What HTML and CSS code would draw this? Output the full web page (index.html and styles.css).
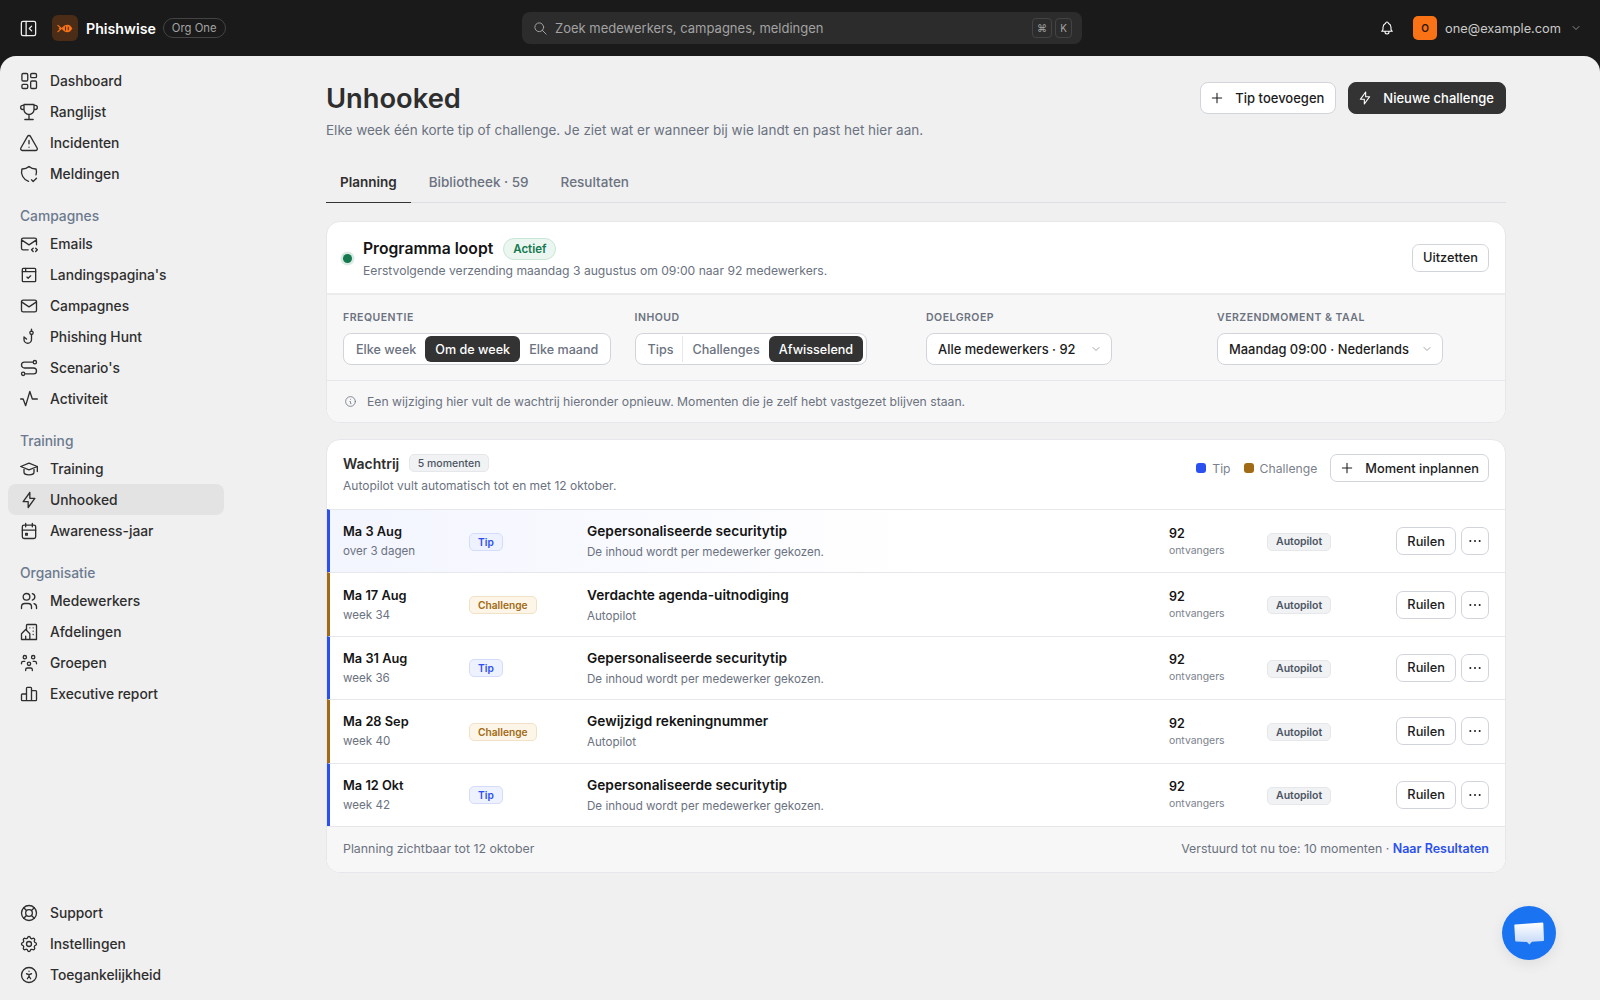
FILE: index.html
```html
<!DOCTYPE html>
<html lang="nl">
<head>
    <meta charset="UTF-8">
    <title>Unhooked - Phishwise</title>
    <link rel="stylesheet" href="styles.css">
</head>
<body>
    <svg class="sprite" xmlns="http://www.w3.org/2000/svg">
        <symbol id="i-panel" viewBox="0 0 24 24"><rect x="3" y="3" width="18" height="18" rx="2"/><path d="M9 3v18M16 15l-3-3 3-3"/></symbol>
        <symbol id="i-dashboard" viewBox="0 0 24 24"><rect x="3.5" y="3" width="7" height="9" rx="1.5"/><rect x="14" y="3" width="7" height="5" rx="1.5"/><rect x="14" y="12" width="7" height="9" rx="1.5"/><rect x="3.5" y="16" width="7" height="5" rx="1.5"/></symbol>
        <symbol id="i-trophy" viewBox="0 0 24 24"><path d="M6 9H4.5a2.5 2.5 0 0 1 0-5H6M18 9h1.5a2.5 2.5 0 0 0 0-5H18M7 21h10M12 15v6M18 3H6v6a6 6 0 0 0 12 0V3Z"/></symbol>
        <symbol id="i-alert" viewBox="0 0 24 24"><path d="M21.73 18l-8-14a2 2 0 0 0-3.48 0l-8 14A2 2 0 0 0 4 21h16a2 2 0 0 0 1.73-3M12 9v4M12 17h.01"/></symbol>
        <symbol id="i-shield" viewBox="0 0 24 24"><path d="M11.46 20.846a12 12 0 0 1-7.96-14.846a12 12 0 0 0 8.5-3a12 12 0 0 0 8.5 3a12 12 0 0 1-.09 7.06M15 19l2 2l4-4"/></symbol>
        <symbol id="i-mailcode" viewBox="0 0 24 24"><path d="M11 19H5a2 2 0 0 1-2-2V7a2 2 0 0 1 2-2h14a2 2 0 0 1 2 2v6M3 7l9 6l9-6M20 21l2-2l-2-2M17 17l-2 2l2 2"/></symbol>
        <symbol id="i-browser" viewBox="0 0 24 24"><rect x="4" y="4" width="16" height="16" rx="1"/><path d="M4 8h16M8 4v4M9.5 14.5l1.5 1.500l3-3"/></symbol>
        <symbol id="i-mail" viewBox="0 0 24 24"><rect x="3" y="5" width="18" height="14" rx="2"/><path d="M3 7l9 6l9-6"/></symbol>
        <symbol id="i-hook" viewBox="0 0 24 24"><path d="M15 9v6a4.500 4.500 0 0 1-9 0v-3l3 2.500"/><circle cx="15" cy="7" r="2"/><path d="M15 5V2.500"/></symbol>
        <symbol id="i-route" viewBox="0 0 24 24"><circle cx="5" cy="19" r="2"/><path d="M8 19h9.500a3.500 3.500 0 0 0 0-7h-11a3.500 3.500 0 0 1 0-7H16"/><circle cx="19" cy="5" r="2"/></symbol>
        <symbol id="i-activity" viewBox="0 0 24 24"><path d="M2 12h3l3 8l5-17l3 9h6"/></symbol>
        <symbol id="i-school" viewBox="0 0 24 24"><path d="M22 9l-10-4l-10 4l10 4l10-4v6M6 10.600V16a6 3 0 0 0 12 0v-5.400"/></symbol>
        <symbol id="i-bolt" viewBox="0 0 24 24"><path d="M13 3v7h6l-8 11v-7H5l8-11"/></symbol>
        <symbol id="i-calendar" viewBox="0 0 24 24"><rect x="4" y="5" width="16" height="16" rx="2"/><path d="M16 3v4M8 3v4M4 11h16M8 15h2v2H8z"/></symbol>
        <symbol id="i-users" viewBox="0 0 24 24"><circle cx="9" cy="7" r="4"/><path d="M3 21v-2a4 4 0 0 1 4-4h4a4 4 0 0 1 4 4v2M16 3.130a4 4 0 0 1 0 7.750M21 21v-2a4 4 0 0 0-3-3.850"/></symbol>
        <symbol id="i-building" viewBox="0 0 24 24"><path d="M8 9l5 5v7H8v-4m0 4H3v-7l5-5m1 1V4a1 1 0 0 1 1-1h10a1 1 0 0 1 1 1v17h-8M13 7v.01M17 7v.01M17 11v.01M17 15v.01"/></symbol>
        <symbol id="i-group" viewBox="0 0 24 24"><path d="M10 13a2 2 0 1 0 4 0a2 2 0 0 0-4 0M8 21v-1a2 2 0 0 1 2-2h4a2 2 0 0 1 2 2v1M15 5a2 2 0 1 0 4 0a2 2 0 0 0-4 0M17 10h2a2 2 0 0 1 2 2v1M5 5a2 2 0 1 0 4 0a2 2 0 0 0-4 0M3 13v-1a2 2 0 0 1 2-2h2"/></symbol>
        <symbol id="i-chart" viewBox="0 0 24 24"><path d="M3 13a1 1 0 0 1 1-1h4a1 1 0 0 1 1 1v6a1 1 0 0 1-1 1H4a1 1 0 0 1-1-1zM15 9a1 1 0 0 1 1-1h4a1 1 0 0 1 1 1v10a1 1 0 0 1-1 1h-4a1 1 0 0 1-1-1zM9 5a1 1 0 0 1 1-1h4a1 1 0 0 1 1 1v14a1 1 0 0 1-1 1h-4a1 1 0 0 1-1-1zM4 20h16"/></symbol>
        <symbol id="i-lifebuoy" viewBox="0 0 24 24"><circle cx="12" cy="12" r="4"/><circle cx="12" cy="12" r="9"/><path d="M15 15l3.350 3.350M9 15l-3.350 3.350M5.650 5.650L9 9M18.350 5.650L15 9"/></symbol>
        <symbol id="i-settings" viewBox="0 0 24 24"><path d="M10.325 4.317c.426-1.756 2.924-1.756 3.35 0a1.724 1.724 0 0 0 2.573 1.066c1.543-.94 3.31.826 2.37 2.37a1.724 1.724 0 0 0 1.065 2.572c1.756.426 1.756 2.924 0 3.35a1.724 1.724 0 0 0-1.066 2.573c.94 1.543-.826 3.31-2.37 2.37a1.724 1.724 0 0 0-2.572 1.065c-.426 1.756-2.924 1.756-3.35 0a1.724 1.724 0 0 0-2.573-1.066c-1.543.94-3.31-.826-2.37-2.37a1.724 1.724 0 0 0-1.065-2.572c-1.756-.426-1.756-2.924 0-3.35a1.724 1.724 0 0 0 1.066-2.573c-.94-1.543.826-3.31 2.37-2.37c1 .608 2.296.07 2.572-1.065z"/><circle cx="12" cy="12" r="3"/></symbol>
        <symbol id="i-access" viewBox="0 0 24 24"><circle cx="12" cy="12" r="9"/><path d="M10 16.500l2-3l2 3m-2-3v-2l3-1m-6 0l3 1M12 7.500h.01"/></symbol>
        <symbol id="i-bell" viewBox="0 0 24 24"><path d="M10 5a2 2 0 1 1 4 0a7 7 0 0 1 4 6v3a4 4 0 0 0 2 3H4a4 4 0 0 0 2-3v-3a7 7 0 0 1 4-6M9 17v1a3 3 0 0 0 6 0v-1"/></symbol>
        <symbol id="i-search" viewBox="0 0 24 24"><circle cx="10" cy="10" r="7"/><path d="M21 21l-6-6"/></symbol>
        <symbol id="i-plus" viewBox="0 0 24 24"><path d="M12 5v14M5 12h14"/></symbol>
        <symbol id="i-chevron" viewBox="0 0 24 24"><path d="M6 9l6 6l6-6"/></symbol>
        <symbol id="i-info" viewBox="0 0 24 24"><circle cx="12" cy="12" r="9"/><path d="M12 8h.01M11 12h1v4h1"/></symbol>
        <symbol id="i-dots" viewBox="0 0 24 24"><path d="M5 12h.01M12 12h.01M19 12h.01"/></symbol>
    </svg>

    <header class="topbar">
        <div class="topbar-left">
            <svg class="icon panel-toggle"><use href="#i-panel"/></svg>
            <div class="brand-tile">
                <svg viewBox="0 0 24 16" width="17" height="11">
                    <path class="fish-body" d="M6 8c3-4 6-5.500 9-5.500S20 5 22 8c-2 3-4 5.500-7 5.500S9 12 6 8z"/>
                    <path class="fish-tail" d="M1 3.500L6 8l-5 4.500M3 8h3"/>
                    <path class="fish-mark" d="M12 5v6M16 5.500v5"/>
                </svg>
            </div>
            <span class="brand-name">Phishwise</span>
            <span class="org-pill">Org One</span>
        </div>
        <div class="search">
            <svg class="icon search-icon"><use href="#i-search"/></svg>
            <span class="search-text">Zoek medewerkers, campagnes, meldingen</span>
            <span class="kbd">⌘</span>
            <span class="kbd kbd-key">K</span>
        </div>
        <div class="topbar-right">
            <svg class="icon bell"><use href="#i-bell"/></svg>
            <span class="avatar">O</span>
            <span class="email">one@example.com</span>
            <svg class="icon email-chevron"><use href="#i-chevron"/></svg>
        </div>
    </header>

    <div class="shell">
        <nav class="sidebar">
            <div class="nav-top">
                <a class="nav-item"><svg class="icon"><use href="#i-dashboard"/></svg>Dashboard</a>
                <a class="nav-item"><svg class="icon"><use href="#i-trophy"/></svg>Ranglijst</a>
                <a class="nav-item"><svg class="icon"><use href="#i-alert"/></svg>Incidenten</a>
                <a class="nav-item"><svg class="icon"><use href="#i-shield"/></svg>Meldingen</a>

                <div class="nav-label">Campagnes</div>
                <a class="nav-item"><svg class="icon"><use href="#i-mailcode"/></svg>Emails</a>
                <a class="nav-item"><svg class="icon"><use href="#i-browser"/></svg>Landingspagina's</a>
                <a class="nav-item"><svg class="icon"><use href="#i-mail"/></svg>Campagnes</a>
                <a class="nav-item"><svg class="icon"><use href="#i-hook"/></svg>Phishing Hunt</a>
                <a class="nav-item"><svg class="icon"><use href="#i-route"/></svg>Scenario's</a>
                <a class="nav-item"><svg class="icon"><use href="#i-activity"/></svg>Activiteit</a>

                <div class="nav-label">Training</div>
                <a class="nav-item"><svg class="icon"><use href="#i-school"/></svg>Training</a>
                <a class="nav-item active"><svg class="icon"><use href="#i-bolt"/></svg>Unhooked</a>
                <a class="nav-item"><svg class="icon"><use href="#i-calendar"/></svg>Awareness-jaar</a>

                <div class="nav-label">Organisatie</div>
                <a class="nav-item"><svg class="icon"><use href="#i-users"/></svg>Medewerkers</a>
                <a class="nav-item"><svg class="icon"><use href="#i-building"/></svg>Afdelingen</a>
                <a class="nav-item"><svg class="icon"><use href="#i-group"/></svg>Groepen</a>
                <a class="nav-item"><svg class="icon"><use href="#i-chart"/></svg>Executive report</a>
            </div>
            <div class="nav-bottom">
                <a class="nav-item"><svg class="icon"><use href="#i-lifebuoy"/></svg>Support</a>
                <a class="nav-item"><svg class="icon"><use href="#i-settings"/></svg>Instellingen</a>
                <a class="nav-item"><svg class="icon"><use href="#i-access"/></svg>Toegankelijkheid</a>
            </div>
        </nav>

        <main class="main">
            <div class="page-head">
                <div>
                    <h1 class="page-title">Unhooked</h1>
                    <p class="page-sub">Elke week één korte tip of challenge. Je ziet wat er wanneer bij wie landt en past het hier aan.</p>
                </div>
                <div class="page-actions">
                    <button class="btn btn-large" type="button"><svg class="icon"><use href="#i-plus"/></svg>Tip toevoegen</button>
                    <button class="btn btn-large btn-dark" type="button"><svg class="icon"><use href="#i-bolt"/></svg>Nieuwe challenge</button>
                </div>
            </div>

            <div class="tabs">
                <a class="tab active">Planning</a>
                <a class="tab">Bibliotheek · 59</a>
                <a class="tab">Resultaten</a>
            </div>

            <section class="card">
                <div class="status-row">
                    <span class="status-dot"></span>
                    <div class="status-text">
                        <div class="status-title">Programma loopt <span class="badge-active">Actief</span></div>
                        <div class="status-sub">Eerstvolgende verzending maandag 3 augustus om 09:00 naar 92 medewerkers.</div>
                    </div>
                    <button class="btn" type="button">Uitzetten</button>
                </div>
                <div class="controls">
                    <div class="control">
                        <div class="control-label">Frequentie</div>
                        <div class="segment">
                            <span class="seg-item">Elke week</span>
                            <span class="seg-item active">Om de week</span>
                            <span class="seg-item">Elke maand</span>
                        </div>
                    </div>
                    <div class="control">
                        <div class="control-label">Inhoud</div>
                        <div class="segment">
                            <span class="seg-item seg-divided">Tips</span>
                            <span class="seg-item">Challenges</span>
                            <span class="seg-item active">Afwisselend</span>
                        </div>
                    </div>
                    <div class="control">
                        <div class="control-label">Doelgroep</div>
                        <div class="select select-audience"><span class="select-text">Alle medewerkers · 92</span><svg class="icon"><use href="#i-chevron"/></svg></div>
                    </div>
                    <div class="control">
                        <div class="control-label">Verzendmoment &amp; taal</div>
                        <div class="select select-moment"><span class="select-text">Maandag 09:00 · Nederlands</span><svg class="icon"><use href="#i-chevron"/></svg></div>
                    </div>
                </div>
                <div class="note">
                    <svg class="icon"><use href="#i-info"/></svg>
                    Een wijziging hier vult de wachtrij hieronder opnieuw. Momenten die je zelf hebt vastgezet blijven staan.
                </div>
            </section>

            <section class="card queue">
                <div class="queue-head">
                    <div>
                        <div class="queue-title">Wachtrij <span class="count-pill">5 momenten</span></div>
                        <div class="queue-sub">Autopilot vult automatisch tot en met 12 oktober.</div>
                    </div>
                    <div class="queue-tools">
                        <span class="legend"><i class="swatch swatch-tip"></i>Tip</span>
                        <span class="legend"><i class="swatch swatch-challenge"></i>Challenge</span>
                        <button class="btn btn-icon" type="button"><svg class="icon"><use href="#i-plus"/></svg>Moment inplannen</button>
                    </div>
                </div>

                <div class="row row-tip row-next">
                    <div><div class="row-main">Ma 3 Aug</div><div class="row-sub">over 3 dagen</div></div>
                    <div><span class="type type-tip">Tip</span></div>
                    <div><div class="row-title">Gepersonaliseerde securitytip</div><div class="row-sub">De inhoud wordt per medewerker gekozen.</div></div>
                    <div><div class="row-num">92</div><div class="row-small">ontvangers</div></div>
                    <div><span class="auto">Autopilot</span></div>
                    <div class="row-actions"><button class="btn" type="button">Ruilen</button><button class="btn btn-more" type="button"><svg class="icon"><use href="#i-dots"/></svg></button></div>
                </div>
                <div class="row row-challenge">
                    <div><div class="row-main">Ma 17 Aug</div><div class="row-sub">week 34</div></div>
                    <div><span class="type type-challenge">Challenge</span></div>
                    <div><div class="row-title">Verdachte agenda-uitnodiging</div><div class="row-sub">Autopilot</div></div>
                    <div><div class="row-num">92</div><div class="row-small">ontvangers</div></div>
                    <div><span class="auto">Autopilot</span></div>
                    <div class="row-actions"><button class="btn" type="button">Ruilen</button><button class="btn btn-more" type="button"><svg class="icon"><use href="#i-dots"/></svg></button></div>
                </div>
                <div class="row row-tip">
                    <div><div class="row-main">Ma 31 Aug</div><div class="row-sub">week 36</div></div>
                    <div><span class="type type-tip">Tip</span></div>
                    <div><div class="row-title">Gepersonaliseerde securitytip</div><div class="row-sub">De inhoud wordt per medewerker gekozen.</div></div>
                    <div><div class="row-num">92</div><div class="row-small">ontvangers</div></div>
                    <div><span class="auto">Autopilot</span></div>
                    <div class="row-actions"><button class="btn" type="button">Ruilen</button><button class="btn btn-more" type="button"><svg class="icon"><use href="#i-dots"/></svg></button></div>
                </div>
                <div class="row row-challenge">
                    <div><div class="row-main">Ma 28 Sep</div><div class="row-sub">week 40</div></div>
                    <div><span class="type type-challenge">Challenge</span></div>
                    <div><div class="row-title">Gewijzigd rekeningnummer</div><div class="row-sub">Autopilot</div></div>
                    <div><div class="row-num">92</div><div class="row-small">ontvangers</div></div>
                    <div><span class="auto">Autopilot</span></div>
                    <div class="row-actions"><button class="btn" type="button">Ruilen</button><button class="btn btn-more" type="button"><svg class="icon"><use href="#i-dots"/></svg></button></div>
                </div>
                <div class="row row-tip">
                    <div><div class="row-main">Ma 12 Okt</div><div class="row-sub">week 42</div></div>
                    <div><span class="type type-tip">Tip</span></div>
                    <div><div class="row-title">Gepersonaliseerde securitytip</div><div class="row-sub">De inhoud wordt per medewerker gekozen.</div></div>
                    <div><div class="row-num">92</div><div class="row-small">ontvangers</div></div>
                    <div><span class="auto">Autopilot</span></div>
                    <div class="row-actions"><button class="btn" type="button">Ruilen</button><button class="btn btn-more" type="button"><svg class="icon"><use href="#i-dots"/></svg></button></div>
                </div>

                <div class="queue-foot">
                    <span>Planning zichtbaar tot 12 oktober</span>
                    <span>Verstuurd tot nu toe: 10 momenten · <a class="foot-link">Naar Resultaten</a></span>
                </div>
            </section>
        </main>
    </div>

    <button class="chat" type="button">
        <svg viewBox="0 0 32 28" width="32" height="28">
            <defs>
                <linearGradient id="chat-fill" x1="0" y1="0" x2="0" y2="1">
                    <stop offset="0" stop-color="#ffffff"/>
                    <stop offset="1" stop-color="#c2d7f8"/>
                </linearGradient>
            </defs>
            <path fill="url(#chat-fill)" d="M2 5.500L29.500 3.500c.5 0 .8.300.8.800l.7 17c0 .5-.3.800-.8.800L19 22.800l-2.500 2.700-2.500-2.500L3 22.500c-.5 0-.8-.3-.8-.8L1.300 6.300c0-.4.200-.7.700-.8z"/>
        </svg>
    </button>
</body>
</html>
```

FILE: styles.css
```css
* {
    box-sizing: border-box;
}

html, body {
    margin: 0;
    height: 1000px;
    overflow: hidden;
}

body {
    display: flex;
    flex-direction: column;
    background-color: #1a1a1a;
    color: #2e2e2e;
    font-family: "Inter", "Noto Sans", sans-serif;
    font-size: 14px;
}

.sprite {
    display: none;
}

.icon {
    width: 20px;
    height: 20px;
    flex: none;
    fill: none;
    stroke: currentColor;
    stroke-width: 1.600;
    stroke-linecap: round;
    stroke-linejoin: round;
}

/* top bar */
.topbar {
    display: grid;
    grid-template-columns: 522px 560px 1fr;
    align-items: center;
    height: 56px;
    flex: none;
    color: #fff;
}

.topbar-left {
    display: flex;
    align-items: center;
    padding-left: 19px;
}

.panel-toggle {
    width: 19px;
    height: 19px;
    color: #f0f0f0;
}

.brand-tile {
    display: flex;
    align-items: center;
    justify-content: center;
    width: 26px;
    height: 26px;
    margin-left: 14px;
    border-radius: 6px;
    background-color: #4b2d17;
}

.fish-body {
    fill: #f97316;
}

.fish-tail {
    fill: none;
    stroke: #f97316;
    stroke-width: 1.800;
    stroke-linecap: round;
    stroke-linejoin: round;
}

.fish-mark {
    fill: none;
    stroke: #4b2d17;
    stroke-width: 1.500;
}

.brand-name {
    margin-left: 8px;
    font-size: 14.200px;
    font-weight: 600;
}

.org-pill {
    display: flex;
    align-items: center;
    height: 20px;
    margin-left: 7px;
    padding: 0 8px;
    border: 1px solid #444;
    border-radius: 10px;
    font-size: 11.300px;
    color: #a3a3a3;
}

.search {
    display: flex;
    align-items: center;
    height: 32px;
    padding: 0 10px 0 11px;
    border-radius: 8px;
    background-color: #2c2c2c;
    color: #a3a3a3;
}

.search-icon {
    width: 15px;
    height: 15px;
}

.search-text {
    flex: 1;
    margin-left: 7px;
    font-size: 13px;
}

.kbd {
    display: flex;
    align-items: center;
    justify-content: center;
    width: 20px;
    height: 20px;
    margin-left: 3px;
    border: 1px solid #444;
    border-radius: 4px;
    font-size: 10px;
    color: #a3a3a3;
}

.kbd-key {
    width: 17px;
}

.topbar-right {
    display: flex;
    align-items: center;
    justify-content: flex-end;
    padding-right: 18px;
}

.bell {
    width: 16px;
    height: 16px;
    margin-right: 18px;
}

.avatar {
    display: flex;
    align-items: center;
    justify-content: center;
    width: 24px;
    height: 24px;
    border-radius: 5px;
    background-color: #f97316;
    color: #2b1606;
    font-size: 10px;
    font-weight: 600;
}

.email {
    margin-left: 8px;
    font-size: 12.800px;
    color: #c9c9c9;
}

.email-chevron {
    width: 12px;
    height: 12px;
    margin-left: 9px;
    color: #a3a3a3;
}

/* page shell */
.shell {
    display: flex;
    flex: 1;
    min-height: 0;
    border-radius: 16px 16px 0 0;
    background-color: #f0f0f0;
}

.sidebar {
    display: flex;
    flex-direction: column;
    justify-content: space-between;
    width: 232px;
    flex: none;
    padding: 9px 8px 10px;
}

.nav-item {
    display: flex;
    align-items: center;
    gap: 11px;
    height: 31px;
    padding-left: 11px;
    border-radius: 8px;
    font-size: 13.800px;
    font-weight: 500;
    color: #2e2e2e;
}

.nav-item.active {
    background-color: #e3e3e3;
}

.nav-label {
    padding: 18px 12px 2px;
    height: 39px;
    line-height: 19px;
    font-size: 13.800px;
    font-weight: 500;
    color: #6b7a8f;
}

/* main column */
.main {
    flex: 1;
    max-width: 1180px;
    margin: 0 auto;
}

.page-head {
    display: flex;
    justify-content: space-between;
    padding-top: 26px;
}

.page-title {
    margin: 1px 0 0;
    font-size: 27.300px;
    line-height: 32px;
    font-weight: 600;
    color: #2e2e2e;
}

.page-sub {
    margin: 6px 0 0;
    font-size: 13.500px;
    line-height: 18px;
    color: #6b7280;
}

.page-actions {
    display: flex;
    gap: 12px;
    align-items: flex-start;
}

.btn {
    display: inline-flex;
    align-items: center;
    justify-content: center;
    gap: 10px;
    height: 28px;
    padding: 0 10px;
    border: 1px solid #d1d5db;
    border-radius: 7px;
    background-color: #fff;
    color: #1c1c1c;
    font-family: inherit;
    font-size: 12.800px;
    font-weight: 500;
}

.btn .icon {
    width: 16px;
    height: 16px;
}

.btn-large {
    height: 32px;
    padding: 0 11px 0 8px;
    font-size: 13px;
    border-radius: 8px;
}

.btn-icon {
    padding: 0 9px 0 8px;
}

.btn-dark {
    border-color: #333;
    background-color: #333;
    color: #fff;
}

.tabs {
    display: flex;
    gap: 4px;
    margin-top: 23px;
    border-bottom: 1px solid #dcdfe3;
}

.tab {
    padding: 0 14px;
    height: 41px;
    line-height: 40px;
    margin-bottom: -1px;
    font-size: 13.500px;
    font-weight: 500;
    color: #6b7280;
}

.tab.active {
    border-bottom: 1px solid #333;
    color: #2e2e2e;
    font-weight: 600;
}

.card {
    margin-top: 18px;
    border: 1px solid #e5e7eb;
    border-radius: 14px;
    background-color: #fff;
    overflow: hidden;
}

.status-row {
    display: flex;
    align-items: center;
    height: 73px;
    padding: 0 16px;
    border-bottom: 2px solid #ececec;
}

.status-dot {
    position: relative;
    top: 1px;
    width: 9px;
    height: 9px;
    margin-right: 11px;
    flex: none;
    border-radius: 50%;
    background-color: #15784f;
    box-shadow: 0 0 0 2.500px #d9ebe2;
}

.status-text {
    flex: 1;
}

.status-title {
    display: flex;
    align-items: center;
    gap: 10px;
    font-size: 15.700px;
    font-weight: 600;
    color: #141414;
}

.badge-active {
    display: flex;
    align-items: center;
    height: 22px;
    padding: 0 9px;
    border: 1px solid #c9e6d7;
    border-radius: 11px;
    background-color: #ebf6f0;
    color: #15784f;
    font-size: 11.500px;
    font-weight: 600;
}

.status-sub {
    margin-top: 3px;
    font-size: 12.150px;
    color: #6b7280;
}

.controls {
    display: grid;
    grid-template-columns: 291.500px 291.500px 291px 1fr;
    height: 86px;
    padding: 15px 16px 0;
    border-bottom: 1px solid #e5e7eb;
    background-color: #f7f7f7;
}

.control-label {
    height: 23px;
    line-height: 16px;
    font-size: 10.500px;
    font-weight: 600;
    letter-spacing: 0.5px;
    text-transform: uppercase;
    color: #6b7280;
}

.segment {
    display: inline-flex;
    align-items: center;
    height: 32px;
    padding: 2px 3px;
    border: 1px solid #d1d5db;
    border-radius: 8px;
    background-color: #fff;
}

.seg-item {
    display: flex;
    align-items: center;
    height: 26px;
    padding: 0 9px;
    border-radius: 6px;
    font-size: 12.600px;
    font-weight: 500;
    color: #6b7280;
}

.seg-item.active {
    padding: 0 10px;
    background-color: #333;
    color: #fff;
}

.seg-divided {
    border-right: 1px solid #e5e7eb;
    border-radius: 0;
}

.select {
    display: flex;
    align-items: center;
    height: 32px;
    padding: 0 9px 0 11px;
    border: 1px solid #d1d5db;
    border-radius: 8px;
    background-color: #fff;
    color: #1c1c1c;
    font-size: 12.900px;
    font-weight: 500;
}

.select .icon {
    width: 12px;
    height: 12px;
    color: #8a8f98;
}

.select-text {
    flex: 1;
    white-space: nowrap;
    overflow: hidden;
}

.select-audience {
    width: 186px;
}

.select-moment {
    width: 226px;
}

.note {
    display: flex;
    align-items: center;
    gap: 10px;
    height: 41px;
    padding-left: 17px;
    background-color: #f7f7f7;
    font-size: 12.200px;
    color: #6b7280;
}

.note .icon {
    width: 13px;
    height: 13px;
    stroke-width: 1.500;
}

/* queue */
.queue {
    margin-top: 16px;
}

.queue-head {
    display: flex;
    align-items: flex-start;
    justify-content: space-between;
    height: 69px;
    padding: 14px 16px 0;
}

.queue-title {
    display: flex;
    align-items: center;
    gap: 10px;
    font-size: 14px;
    font-weight: 600;
    color: #2e2e2e;
}

.count-pill {
    display: flex;
    align-items: center;
    height: 18px;
    padding: 0 7.500px;
    border: 1px solid #e5e7eb;
    border-radius: 5px;
    background-color: #f1f2f4;
    font-size: 10.500px;
    font-weight: 500;
    color: #4b5563;
}

.queue-sub {
    margin-top: 6px;
    font-size: 12px;
    color: #6b7280;
}

.queue-tools {
    display: flex;
    align-items: center;
}

.legend {
    display: flex;
    align-items: center;
    gap: 6px;
    margin-right: 13px;
    font-size: 12.200px;
    color: #7b818b;
}

.swatch {
    width: 10px;
    height: 10px;
    border-radius: 3px;
}

.swatch-tip {
    background-color: #2b50f0;
}

.swatch-challenge {
    background-color: #a16a14;
}

.row {
    display: grid;
    grid-template-columns: 126px 118px 582px 98px 1fr auto;
    align-items: center;
    height: 63.400px;
    padding: 0 16px 0 13px;
    border-top: 1px solid #e5e7eb;
    border-left: 3px solid transparent;
}

.row-tip {
    border-left-color: #2b50f0;
}

.row-challenge {
    border-left-color: #a16a14;
}

.row-next {
    background: linear-gradient(90deg, #f3f5ff, #fff 50%);
}

.row-main {
    font-size: 12.800px;
    font-weight: 600;
    color: #141414;
}

.row-title {
    margin-bottom: 6px;
    font-size: 13.700px;
    font-weight: 600;
    color: #141414;
}

.row-sub {
    margin-top: 5px;
    font-size: 11.600px;
    color: #6b7280;
}

.row-title + .row-sub {
    margin-top: 0;
}

.row-num {
    font-size: 12.500px;
    font-weight: 600;
    color: #141414;
}

.row-small {
    margin-top: 3px;
    font-size: 10.400px;
    color: #7b818b;
}

.type {
    display: inline-flex;
    align-items: center;
    height: 18px;
    padding: 0 8px;
    border-radius: 5px;
    font-size: 10.200px;
    font-weight: 600;
}

.type-tip {
    border: 1px solid #d5dcfb;
    background-color: #eef1fe;
    color: #2b50f0;
}

.type-challenge {
    border: 1px solid #f1e2c6;
    background-color: #fdf6e8;
    color: #a16a14;
}

.auto {
    display: inline-flex;
    align-items: center;
    height: 18px;
    padding: 0 8px;
    border: 1px solid #e5e7eb;
    border-radius: 5px;
    background-color: #f1f2f4;
    font-size: 10.500px;
    font-weight: 600;
    color: #4b5563;
}

.row-actions {
    display: flex;
    gap: 5px;
}

.btn-more {
    width: 28px;
    padding: 0;
}

.btn-more .icon {
    stroke-width: 3;
}

.queue-foot {
    display: flex;
    align-items: center;
    justify-content: space-between;
    height: 46px;
    padding: 0 16px 2px;
    border-top: 1px solid #e5e7eb;
    background-color: #f7f7f7;
    font-size: 12.350px;
    color: #6b7280;
}

.foot-link {
    font-size: 12.500px;
    font-weight: 600;
    color: #2b50f0;
}

.chat {
    position: fixed;
    left: 1502px;
    top: 906px;
    display: flex;
    align-items: center;
    justify-content: center;
    width: 54px;
    height: 54px;
    padding: 0;
    border: none;
    border-radius: 50%;
    background-color: #1a73f0;
    box-shadow: 0 4px 14px rgba(0, 0, 0, 0.08);
}
```
